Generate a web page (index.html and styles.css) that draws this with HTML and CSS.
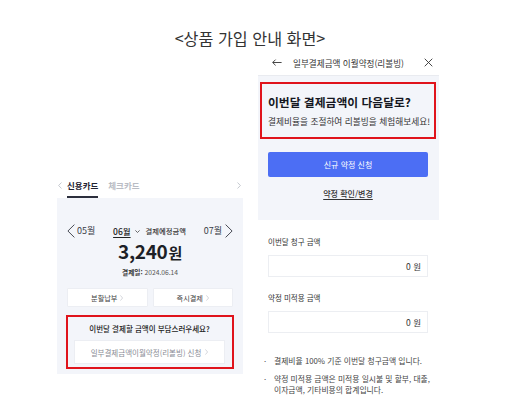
FILE: index.html
```html
<!DOCTYPE html>
<html lang="ko">
<head>
<meta charset="utf-8">
<title>상품 가입 안내 화면</title>
<link rel="stylesheet" href="styles.css">
</head>
<body>
<div class="page">
  <h1 class="title">&lt;상품 가입 안내 화면&gt;</h1>
  <div class="screens">
    <section class="card-screen">
      <div class="tabs">
        <svg class="tab-arrow" viewBox="0 0 4 7"><path d="M3.5 0.5 L0.6 3.5 L3.5 6.5"/></svg>
        <span class="tab active">신용카드</span>
        <span class="tab">체크카드</span>
        <svg class="tab-arrow right" viewBox="0 0 4 7"><path d="M0.5 0.5 L3.4 3.5 L0.5 6.5"/></svg>
      </div>
      <div class="bill">
        <div class="months">
          <div class="month">
            <svg class="chev-big" viewBox="0 0 8 14"><path d="M7.4 0.6 L0.9 7 L7.4 13.4"/></svg>
            <span class="month-side prev">05월</span>
          </div>
          <div class="month current">
            <span class="cur">06월</span>
            <svg class="chev-down" viewBox="0 0 5 3"><path d="M0.4 0.4 L2.5 2.5 L4.6 0.4"/></svg>
            <span class="cur-label">결제예정금액</span>
          </div>
          <div class="month">
            <span class="month-side next">07월</span>
            <svg class="chev-big" viewBox="0 0 8 14"><path d="M0.6 0.6 L7.1 7 L0.6 13.4"/></svg>
          </div>
        </div>
        <div class="amount">3,240<span class="won">원</span></div>
        <div class="date"><b>결제일:</b> 2024.06.14</div>
        <div class="actions">
          <button class="act-btn">분할납부<svg class="chev-sm" viewBox="0 0 3 6"><path d="M0.4 0.4 L2.6 3 L0.4 5.6"/></svg></button>
          <button class="act-btn">즉시결제<svg class="chev-sm" viewBox="0 0 3 6"><path d="M0.4 0.4 L2.6 3 L0.4 5.6"/></svg></button>
        </div>
        <div class="promo">
          <p class="promo-text">이번달 결제할 금액이 부담스러우세요?</p>
          <button class="promo-btn">일부결제금액이월약정(리볼빙) 신청<svg class="chev-sm" viewBox="0 0 3 6"><path d="M0.4 0.4 L2.6 3 L0.4 5.6"/></svg></button>
        </div>
      </div>
    </section>

    <section class="rv-screen">
      <header class="rv-header">
        <svg class="back" viewBox="0 0 10 7"><path d="M9.6 3.5 H0.8 M3.6 0.6 L0.7 3.5 L3.6 6.4"/></svg>
        <span class="rv-title">일부결제금액 이월약정(리볼빙)</span>
        <svg class="close" viewBox="0 0 9 9"><path d="M0.7 0.7 L8.3 8.3 M8.3 0.7 L0.7 8.3"/></svg>
      </header>
      <div class="rv-grey">
        <div class="rv-promo">
          <p class="rv-heading">이번달 결제금액이 다음달로?</p>
          <p class="rv-sub">결제비율을 조절하여 리볼빙을 체험해보세요!</p>
        </div>
        <button class="primary">신규 약정 신청</button>
        <a class="rv-link">약정 확인/변경</a>
      </div>
      <div class="rv-body">
        <div class="field-label">이번달 청구 금액</div>
        <div class="field">0 원</div>
        <div class="field-label second">약정 미적용 금액</div>
        <div class="field">0 원</div>
        <ul class="notes">
          <li><span>결제비율 100% 기준 이번달 청구금액 입니다.</span></li>
          <li><span>약정 미적용 금액은 미적용 일시불 및 할부, 대출,<br>이자금액, 기타비용의 합계입니다.</span></li>
        </ul>
      </div>
    </section>
  </div>
</div>
</body>
</html>
```

FILE: styles.css
```css
* { box-sizing: border-box; }

body {
  margin: 0;
  background: #fff;
  font-family: "Noto Sans CJK KR", "Noto Sans", sans-serif;
  color: #222;
}

.page {
  width: 386px;
  margin-left: 57px;
  padding-top: 28px;
}

.title {
  margin: 0;
  font-size: 16.2px;
  line-height: 20px;
  font-weight: 400;
  text-align: center;
  color: #333;
}

.screens {
  display: flex;
  align-items: flex-start;
  gap: 15px;
  margin-top: 2px;
}

/* ---------- left: card screen ---------- */
.card-screen {
  width: 186px;
  margin-top: 128px;
}

.tabs {
  display: flex;
  align-items: flex-start;
  height: 20px;
}

.tab-arrow {
  width: 4px;
  height: 7px;
  margin: 3.5px 0 0 1px;
  fill: none;
  stroke: #b8bcc4;
  stroke-width: 0.8;
}

.tab-arrow.right {
  margin-left: auto;
  margin-right: 2px;
}

.tab {
  font-size: 8.5px;
  line-height: 14px;
  font-weight: 700;
  color: #b9bcc4;
  padding-bottom: 4px;
  border-bottom: 2px solid transparent;
  margin-left: 10px;
}

.tab.active {
  color: #1f2230;
  border-bottom-color: #2c2f3d;
  margin-left: 5px;
}

.bill {
  background: #f3f5fa;
  padding: 25px 9px 5px;
}

.months {
  display: flex;
  justify-content: space-between;
  align-items: center;
  height: 16px;
  padding: 0 1px;
}

.month {
  display: flex;
  align-items: center;
  font-size: 9px;
  line-height: 12px;
  color: #3a3d48;
}

.chev-big {
  width: 8px;
  height: 14px;
  fill: none;
  stroke: #4a4d57;
  stroke-width: 1;
}

.month-side.prev { margin-left: 2px; }
.month-side.next { margin-right: 3px; }

.cur {
  font-size: 8.5px;
  font-weight: 500;
  color: #222;
  text-decoration: underline;
  text-underline-offset: 2px;
}

.chev-down {
  width: 5px;
  height: 3px;
  margin: 0 6px 0 4px;
  fill: none;
  stroke: #444;
  stroke-width: 0.8;
}

.cur-label {
  font-size: 7.3px;
  color: #333;
  font-weight: 500;
}

.amount {
  margin-top: 1px;
  text-align: center;
  font-size: 19px;
  line-height: 22px;
  font-weight: 700;
  color: #1d1f27;
  letter-spacing: -0.3px;
}

.won {
  font-size: 15px;
  margin-left: 1px;
}

.date {
  margin-top: 3px;
  text-align: center;
  font-size: 6.7px;
  line-height: 10px;
  color: #555;
}

.date b { color: #333; }

.actions {
  display: flex;
  gap: 5px;
  margin: 11px 1px 0;
}

.act-btn {
  flex: 1;
  height: 19px;
  display: flex;
  align-items: center;
  justify-content: center;
  gap: 3px;
  background: #fff;
  border: 1px solid #eceef3;
  border-radius: 1px;
  padding: 0;
  font-family: inherit;
  font-size: 7.2px;
  color: #444;
}

.chev-sm {
  width: 3px;
  height: 6px;
  fill: none;
  stroke: #c3c6cd;
  stroke-width: 0.7;
}

.promo {
  margin-top: 8px;
  border: 2px solid #e0141c;
  padding: 6px 7px 3px 6px;
}

.promo-text {
  margin: 0;
  text-align: center;
  font-size: 7.5px;
  line-height: 12px;
  font-weight: 500;
  color: #222;
}

.promo-btn {
  margin-top: 5px;
  width: 100%;
  height: 24px;
  display: flex;
  align-items: center;
  justify-content: center;
  gap: 4px;
  background: #fff;
  border: 1px solid #eceef3;
  padding: 0;
  font-family: inherit;
  font-size: 7.5px;
  color: #8a8d96;
}

/* ---------- right: revolving screen ---------- */
.rv-screen {
  width: 181px;
}

.rv-header {
  height: 25px;
  display: grid;
  grid-template-columns: 1fr auto 1fr;
  align-items: center;
}

.back {
  justify-self: start;
  margin-left: 14px;
  width: 10px;
  height: 7px;
  fill: none;
  stroke: #333;
  stroke-width: 0.9;
}

.rv-title {
  font-size: 8.6px;
  line-height: 12px;
  color: #333;
}

.close {
  justify-self: end;
  margin-right: 6px;
  width: 9px;
  height: 9px;
  fill: none;
  stroke: #333;
  stroke-width: 0.9;
}

.rv-grey {
  background: #f3f5fa;
  border-top: 1px solid #e9ebf0;
  padding: 6px 3px 20px 2px;
}

.rv-promo {
  border: 2px solid #e0141c;
  padding: 10px 6px 9px;
}

.rv-heading {
  margin: 0;
  font-size: 11.8px;
  line-height: 16px;
  font-weight: 700;
  color: #15171f;
}

.rv-sub {
  margin: 6px 0 0;
  font-size: 8.7px;
  line-height: 12px;
  color: #333;
  white-space: nowrap;
}

.primary {
  display: block;
  margin: 13px 0 0 8px;
  width: 160px;
  height: 25px;
  background: #4c6ef4;
  border: none;
  border-radius: 2px;
  padding: 0;
  font-family: inherit;
  font-size: 8px;
  color: #fff;
}

.rv-link {
  display: block;
  margin: 11px 0 0 8px;
  width: 160px;
  text-align: center;
  font-size: 8px;
  line-height: 12px;
  font-weight: 500;
  color: #333;
  text-decoration: underline;
  text-underline-offset: 1.5px;
}

.rv-body {
  padding: 0 11px 0 10px;
}

.field-label {
  margin-top: 17px;
  font-size: 7.5px;
  line-height: 10px;
  color: #333;
}

.field-label.second { margin-top: 16px; }

.field {
  margin-top: 8px;
  height: 22px;
  display: flex;
  align-items: center;
  justify-content: flex-end;
  padding-right: 6px;
  border: 1px solid #eceef2;
  font-size: 8.5px;
  color: #333;
}

.notes {
  list-style: none;
  margin: 22px -20px 0 -5px;
  padding: 0;
  font-size: 7.8px;
  line-height: 11px;
  color: #444;
}

.notes li {
  display: flex;
  white-space: nowrap;
}

.notes li::before {
  content: "·";
  flex: 0 0 10px;
  padding-left: 1px;
}

.notes li + li {
  margin-top: 7px;
}
```
